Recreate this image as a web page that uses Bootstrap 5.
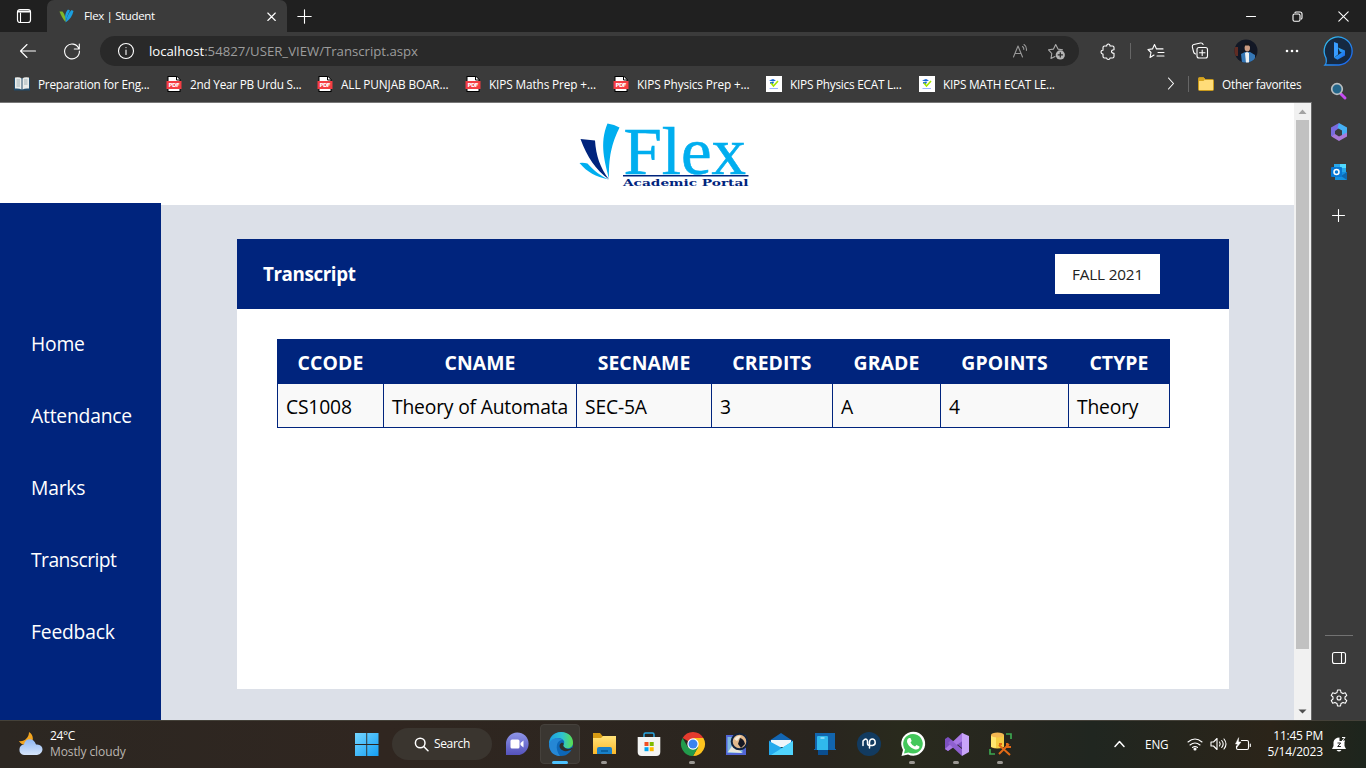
<!DOCTYPE html>
<html lang="en">
<head>
<meta charset="utf-8">
<meta name="viewport" content="width=device-width, initial-scale=1">
<title>Flex | Student</title>
<link href="https://cdn.jsdelivr.net/npm/bootstrap@5.3.0/dist/css/bootstrap.min.css" rel="stylesheet">
<style>
:root{--navy:#00247d;--chrome:#3b3b3b}
body{width:1366px;height:768px;overflow:hidden;font-family:"Open Sans","Noto Sans",sans-serif;font-size:12px;line-height:16px;background:var(--chrome);color:#fff}
svg{display:block;flex:none;overflow:visible}
.ln{fill:none;stroke:#fff;stroke-width:1.1;stroke-linecap:round;stroke-linejoin:round}
.tabstrip{height:32px;background:#202020}
.tab-pages{width:47px;padding-left:16px}
.tab-active{width:240px;background:var(--chrome);border-radius:7px 7px 0 0;padding:0 10px 0 12px}
.tab-title{margin-left:9px;font-size:11.5px;letter-spacing:-.35px}
.toolbar{height:38px;padding-left:6px}
.cell{width:44px;flex:none;display:flex;align-items:center;justify-content:center}
.cell.newtab{width:34px}
.cell.winbtn{width:46px}
.address{width:979px;height:30px;border-radius:15px;background:#292929;margin:0 7px 0 6px;padding:0 4px 0 16px}
.url{margin-left:13px;font-size:13.2px;letter-spacing:-.01px;color:#9d9d9d}
.cell-sm{width:37px;display:flex;justify-content:center}
.vline{width:1px;height:16px;background:#666}
.bookmarks{width:1311px;height:32px;padding:0 0 5px 14px;letter-spacing:-.24px;font-size:11.8px}
.bm{flex:none;display:flex;align-items:center;gap:8px;white-space:nowrap}
.w152{width:152px}.w151{width:151px}.w148{width:148px}.w153{width:153px}
.caps{letter-spacing:-.12px}
.viewport{width:1312px;border-top:1px solid #777;border-right:1px solid #686868}
.site{width:1294px;background:#dce0e8}
.site-head{height:102px;background:#fff;padding-left:36px}
.site-nav{width:161px;background:var(--navy);margin-top:-2px;padding:105px 0 0 31px}
.site-nav .nav-link{height:72px;padding:0;display:flex;align-items:center;color:#fff;font-size:19.3px;letter-spacing:-.2px}
.site-nav .tight{letter-spacing:-.55px}
.panel{width:992px;height:450px;margin:34px 0 0 76px;background:#fff;color:#000}
.panel-head{height:70px;background:var(--navy);padding:0 69px 0 26px}
.panel-head h1{font-size:18.8px;font-weight:700;letter-spacing:-.4px;color:#fff}
.term{width:105px;height:40px;background:#fff;color:#222;font-size:15.3px;letter-spacing:-.15px}
.grades{width:892px;margin:30px 0 0 40px;table-layout:fixed;border-collapse:collapse;font-size:19.3px;letter-spacing:-.18px;line-height:28px;color:#000}
.grades th{background:var(--navy);color:#fff;height:44px;border:1px solid var(--navy);padding:2px 0 0;text-align:center;font-size:19.4px;letter-spacing:.08px}
.grades td{background:#f9f9f9;height:44px;border:1px solid var(--navy);padding:3px 0 0 8px;white-space:nowrap}
.scroll{width:17px;background:#f1f1f1}
.thumb{width:13px;height:529px;background:#c1c1c1}
.edgebar{width:54px;padding-top:11px}
.edgebar svg{margin-right:1px}
.taskbar{height:48px;padding-bottom:1px;background:linear-gradient(90deg,#2c2722 0%,#302620 28%,#29251f 60%,#292a1d 66%,#26261f 74%,#202620 80%,#2b2419 93%,#1d251d 100%);border-top:1px solid #444139}
.weather{width:345px;padding-left:18px;gap:6px}
.search{width:100px;height:32px;border-radius:16px;background:#3a352f;margin:0 2px 0 3px;gap:5px;padding-left:22px}
.app{width:44px;height:46px;flex:none;position:relative;display:flex;align-items:center;justify-content:center}
.app:not(.start) svg{margin-left:1px}
.app.on{width:40px;height:40px;margin:0 2px;border-radius:4px;background:#3a3631;border:1px solid #45413c}
.app .run{position:absolute;bottom:3px;width:6px;height:3px;border-radius:2px;background:#9a9792}
.app.on .run{width:16px;bottom:-1px;background:#4cc2ff}
.tray{width:343px;padding-left:92px}
</style>
</head>
<body class="d-flex flex-column">
<svg width="0" height="0" class="position-absolute">
<defs>
<linearGradient id="gb" x1="0" y1="0" x2="1" y2="1"><stop stop-color="#35c5f0"/><stop offset="1" stop-color="#185df0"/></linearGradient>
<linearGradient id="gw" x1="0" y1="0" x2="1" y2="1"><stop stop-color="#74d5ff"/><stop offset="1" stop-color="#149ff4"/></linearGradient>
<linearGradient id="ge" x1="0" y1="0" x2="1" y2="0"><stop stop-color="#1b9de2"/><stop offset=".55" stop-color="#2fc3d0"/><stop offset="1" stop-color="#5be04b"/></linearGradient>
<linearGradient id="gf" x1="0" y1="0" x2="0" y2="1"><stop stop-color="#ffe27a"/><stop offset="1" stop-color="#fbb829"/></linearGradient>
<linearGradient id="gc" x1="0" y1="0" x2="0" y2="1"><stop stop-color="#8f96e8"/><stop offset="1" stop-color="#5552bb"/></linearGradient>
<linearGradient id="gl" x1="0" y1="0" x2="0" y2="1"><stop stop-color="#8fb7f3"/><stop offset="1" stop-color="#d6e5fb"/></linearGradient>
<symbol id="pdf" viewBox="0 0 16 16"><path d="M1.500 0H11l3.500 3.500V16h-13z" fill="#000"/><path d="M2.500 1h8l3 3v11h-11z" fill="#fff"/><path d="M10.500.500v3.500H14" fill="#fff" stroke="#000"/><path fill="#f43d43" d="M.5 5h15v8H.5z"/><text x="2.500" y="11.200" font-family="DejaVu Sans" font-weight="bold" font-size="5.500" textLength="11" fill="#fff">PDF</text></symbol>
<symbol id="kips" viewBox="0 0 16 16"><path fill="#fff" d="M0 0h16v16H0z"/><path fill="#1668d8" d="m3 4.500 4-1.500 3 1.500-3 1zM4 6h4l-1 2H4.500z"/><path d="m5 7 2.500 3L12 5" fill="none" stroke="#a5e600" stroke-width="1.600"/><path d="M3.500 12.500h8.500" stroke="#9ab4ff"/></symbol>
</defs></svg>

<div class="tabstrip d-flex flex-shrink-0">
 <div class="tab-pages d-flex align-items-center"><svg width="16" height="16" viewBox="0 0 16 16" class="ln"><rect x="1.500" y="1.500" width="13" height="13" rx="2.500" stroke-width="1.200"/><path d="M2.500 3.500h11" stroke-width="2"/><path d="M4.500 5v9"/></svg></div>
 <div class="tab-active d-flex align-items-center">
  <svg width="16" height="16" viewBox="0 0 16 16"><path fill="#1a9fe0" d="M6.500 14C5.500 8 6.500 4 9 1.500l2 1C9 6 8 9 6.500 14z"/><path fill="#1a9fe0" d="M6.500 14.500c1-4 2.500-9 6-12.500l2 1c-1 5-4 9-8 11.500z"/><path fill="#7fb629" d="M.5 3.500h3C6 6 6.500 10 6.500 14 4 11 2 8 .5 3.500z"/></svg>
  <span class="tab-title">Flex | Student</span>
  <svg width="11" height="11" viewBox="0 0 11 11" class="ln ms-auto"><path d="m1.800 2 7.500 7.500m0-7.500L1.800 9.500"/></svg>
 </div>
 <div class="cell newtab"><svg width="15" height="15" viewBox="0 0 15 15" class="ln"><path d="M7.500.8v13.400M.8 7.500h13.400"/></svg></div>
 <div class="d-flex ms-auto">
  <div class="cell winbtn"><svg width="10" height="10" viewBox="0 0 10 10" class="ln"><path d="M.5 5.500h9"/></svg></div>
  <div class="cell winbtn"><svg width="11" height="11" viewBox="0 0 11 11" class="ln"><rect x="1" y="3" width="7" height="7.200" rx="1.500"/><path d="M3 1.500Q3 1 4.500 1H8q2 0 2 2v3.500q0 1-.5 1.500"/></svg></div>
  <div class="cell winbtn"><svg width="11" height="11" viewBox="0 0 11 11" class="ln"><path d="m.8.800 9.400 9.400m0-9.400L.8 10.200"/></svg></div>
 </div>
</div>

<div class="toolbar d-flex align-items-center flex-shrink-0">
 <div class="cell"><svg width="18" height="16" viewBox="0 0 18 16" class="ln"><path d="M16.500 8H1.500M8 1.500 1.500 8 8 14.500"/></svg></div>
 <div class="cell"><svg width="18" height="18" viewBox="0 0 18 18" class="ln"><path d="M15.800 6.500A7.400 7.400 0 1 0 16.400 9M16.300 2v5h-5"/></svg></div>
 <div class="address d-flex align-items-center">
  <svg width="20" height="20" viewBox="0 0 20 20" class="ln"><circle cx="10" cy="10" r="7.500"/><path d="M10 9v4.500M10 6.500v.1"/></svg>
  <span class="url"><span class="text-white">localhost</span>:54827/USER_VIEW/Transcript.aspx</span>
  <div class="cell-sm ms-auto"><svg width="17" height="16" viewBox="0 0 17 16" class="ln" style="stroke:#999"><path d="M2.500 14 7 3l4.500 11M4 10.500h6M11.500 3.500q1.500 1 1.300 3M13 1.500q3 2 2.400 6"/></svg></div>
  <div class="cell-sm"><svg width="19" height="18" viewBox="0 0 19 18"><path class="ln" style="stroke:#aaa" d="m8 14.500-4 2 .8-5L1.500 7.800l5-.7L8.700 2.500 11 7.100l4.500.7"/><circle cx="13.300" cy="12.900" r="4.600" fill="#b4b4b4"/><path d="M13.300 10.300v5.200M10.700 12.900h5.200" stroke="#292929" stroke-width="1.200"/></svg></div>
 </div>
 <div class="cell"><svg width="16" height="17" viewBox="0 0 16 17" class="ln"><path d="M4.500 3h2.200c-.3-2.600 3.600-2.600 3.300 0h2.500q1.500 0 1.500 1.500v2.200c-3.300-.2-3.300 3.800 0 3.600V13.500q0 1.500-1.500 1.500H10c0 2-3.300 2-3.300 0H4.500Q3 15 3 13.500V11C.4 11.200.4 7 3 7.200V4.500Q3 3 4.500 3z"/></svg></div>
 <div class="vline"></div>
 <div class="cell" style="margin-left:3px"><svg width="18" height="17" viewBox="0 0 18 17" class="ln"><path d="m7 12-4 2.500 1-5L1 6.500l4.500-.6L7.500 1.500l2 4.400H16M11 9.500h6M10 13h7"/></svg></div>
 <div class="cell"><svg width="18" height="18" viewBox="0 0 18 18" class="ln"><rect x="6" y="5.500" width="10.500" height="10.500" rx="2"/><path d="M11.200 8v5.500M8.500 10.700H14M4.500 12Q3 11.500 2.600 10L1.300 4.800Q1 3 2.800 2.500L9.500 1q2-.3 2.600 1.500"/></svg></div>
 <div class="cell" style="margin-left:2px"><svg width="24" height="24" viewBox="0 0 24 24"><clipPath id="av"><circle cx="12" cy="12" r="11.500"/></clipPath><g clip-path="url(#av)"><path fill="#121725" d="M0 0h24v24H0z"/><path fill="#602c23" d="M0 8h4v9H0z"/><path fill="#3677b5" d="m7 15 4-2h5l5 3v8H8z"/><path fill="#eef1f3" d="m11 14 2-1 2 1v10h-3z"/><ellipse cx="13.300" cy="8.700" rx="2.700" ry="3.800" fill="#c99a82"/><path fill="#15151a" d="M10 8c0-6 7-5 6.500 0L15 6.500h-4z"/></g></svg></div>
 <div class="cell" style="margin-left:2px"><svg width="14" height="4"><g fill="#fff"><circle cx="2" cy="2" r="1.300"/><circle cx="7" cy="2" r="1.300"/><circle cx="12" cy="2" r="1.300"/></g></svg></div>
 <div class="cell" style="margin-left:3px"><svg width="32" height="32" viewBox="0 0 32 32"><path d="M2 30q2-2 1-7A14 14 0 1 1 16 30z" fill="#152942" stroke="url(#gb)" stroke-width="1.300"/><path d="m11 7 4 1.600v11l-4 3.200z" fill="#389cff"/><path d="m11 22.800 3.500 2L22 20.500v-5l-7-3 1.800 4 2 1z" fill="url(#gb)"/></svg></div>
</div>

<div class="d-flex flex-grow-1" style="min-height:0">
<div class="d-flex flex-column">
 <div class="bookmarks d-flex align-items-center flex-shrink-0">
  <div class="bm w152"><svg width="16" height="16" viewBox="0 0 16 16"><path fill="#224b69" d="M0 2h16v12.500H0z"/><path fill="#e9eceb" d="M1 1.500q5-.8 6.500 1v11Q5 12 1 12.500zM8.500 2.500Q10 .7 15 1.500v11q-4-.5-6.500 1z"/><path d="M2.500 4H6M2.500 6H6m-3.500 2H6m-3.500 2H6m4-6h3.500M10 6h3.500M10 8h3.500" stroke="#a1b1b5"/></svg>Preparation for Eng...</div>
  <div class="bm w151"><svg width="16" height="16"><use href="#pdf"/></svg>2nd Year PB Urdu S...</div>
  <div class="bm w148 caps"><svg width="16" height="16"><use href="#pdf"/></svg>ALL PUNJAB BOAR...</div>
  <div class="bm w148 caps"><svg width="16" height="16"><use href="#pdf"/></svg>KIPS Maths Prep +...</div>
  <div class="bm w153 caps"><svg width="16" height="16"><use href="#pdf"/></svg>KIPS Physics Prep +...</div>
  <div class="bm w153"><svg width="16" height="16"><use href="#kips"/></svg>KIPS Physics ECAT L...</div>
  <div class="bm"><svg width="16" height="16"><use href="#kips"/></svg>KIPS MATH ECAT LE...</div>
  <svg width="8" height="13" viewBox="0 0 8 13" class="ln ms-auto me-3"><path d="m1.500 1 5 5.500-5 5.500"/></svg>
  <div class="vline" style="margin-right:9px;margin-left:-3px"></div>
  <div class="bm" style="width:113px"><svg width="16" height="16" viewBox="0 0 16 16"><path d="M.5 2.500q0-1 1-1h4l2 2h7q1 0 1 1v9q0 1-1 1h-13q-1 0-1-1z" fill="#ffdc79" stroke="#c99a1b"/><path fill="#d6a420" d="M1 2h5l1 1.500L5.500 5H1z"/></svg>Other favorites</div>
 </div>
 <main class="viewport d-flex flex-grow-1">
  <div class="site d-flex flex-column">
   <header class="site-head d-flex justify-content-center flex-shrink-0">
    <svg width="170" height="70" viewBox="580 120 170 70" style="margin-top:17px"><path fill="#00aeef" d="M607.500 123.500q7 1 12 4c-6 13-11 25-10.500 51-4-16-10-35-1.500-55z"/><path fill="#00247d" d="m580.500 139 14.500 1.500c1 15 5 27 14 39C596 170 587 157 580.500 139z"/><path fill="#00aeef" d="M579.500 163q4-.5 8 .5c7 8 13 12 21 16-13-3-21-7-29-16.500z"/>
    <text x="623.500" y="174" font-family="Liberation Serif" font-size="67" textLength="122.500" lengthAdjust="spacingAndGlyphs" fill="#00aeef" stroke="#00aeef" stroke-width=".6">Flex</text><path fill="#00247d" d="M623 175h125.500v1.600H623z"/><text x="623" y="185.600" font-family="DejaVu Serif" font-weight="bold" font-size="10" textLength="125.500" lengthAdjust="spacingAndGlyphs" fill="#00247d">Academic Portal</text></svg>
   </header>
   <div class="d-flex flex-grow-1" style="min-height:0">
    <nav class="site-nav nav flex-column flex-nowrap"><a class="nav-link">Home</a><a class="nav-link">Attendance</a><a class="nav-link">Marks</a><a class="nav-link tight">Transcript</a><a class="nav-link">Feedback</a></nav>
    <section class="panel">
     <div class="panel-head d-flex align-items-center justify-content-between"><h1 class="mb-0">Transcript</h1><div class="term d-flex align-items-center justify-content-center">FALL 2021</div></div>
     <table class="grades">
      <colgroup><col style="width:106px"><col style="width:193px"><col style="width:135px"><col style="width:121px"><col style="width:108px"><col style="width:128px"><col style="width:101px"></colgroup>
      <thead><tr><th>CCODE</th><th>CNAME</th><th>SECNAME</th><th>CREDITS</th><th>GRADE</th><th>GPOINTS</th><th>CTYPE</th></tr></thead>
      <tbody><tr><td>CS1008</td><td>Theory of Automata</td><td>SEC-5A</td><td>3</td><td>A</td><td>4</td><td>Theory</td></tr></tbody>
     </table>
    </section>
   </div>
  </div>
  <div class="scroll d-flex flex-column align-items-center">
   <svg width="17" height="17"><path d="m4.500 11 4-4.500 4 4.500z" fill="#a3a3a3"/></svg><div class="thumb"></div><svg width="17" height="17" class="mt-auto"><path d="m4.500 6.500 4 4 4-4z" fill="#505050"/></svg>
  </div>
 </main>
</div>
<aside class="edgebar d-flex flex-column align-items-center">
 <svg width="20" height="20" viewBox="0 0 20 20"><path d="m12 13 4 4" stroke="#c64bf2" stroke-width="3" stroke-linecap="round"/><circle cx="8" cy="8" r="5.300" fill="#24668a" stroke="#b9bec0" stroke-width="1.700"/></svg>
 <svg width="18" height="18" viewBox="0 0 18 18" style="margin-top:22px"><path fill="#7a6be0" d="M9 0 1 4.500v8.500l4 1.500V8l4-3z"/><path fill="#45b0f5" d="m9 0 8 4.500v6.300L12 13V7.500L7.500 5z"/><path fill="#a979d8" d="M17 9.500v4L9 18l-7.500-4.500L5 11l4 2.500 4-2z"/></svg>
 <svg width="18" height="18" viewBox="0 0 18 18" style="margin-top:22px"><path fill="#28a8ea" d="M4 1h12v8H4z"/><path fill="#50d9ff" d="M10 1h6v4h-6z"/><path fill="#1490df" d="M5 9h12v8H5z"/><path fill="#0f67ae" d="m17 9-6 4 6 4z"/><rect x="1" y="4" width="11" height="10" rx="1" fill="#0878d4"/><circle cx="6.500" cy="9" r="2.500" fill="none" stroke="#fff" stroke-width="1.500"/></svg>
 <svg width="13" height="13" viewBox="0 0 13 13" class="ln" style="margin-top:28px"><path d="M6.500.5v12M.5 6.500h12"/></svg>
 <div class="mt-auto" style="width:28px;height:1px;background:#727272"></div>
 <svg width="16" height="14" viewBox="0 0 16 14" class="ln" style="margin-top:15px"><rect x="1.500" y="1.500" width="13" height="11" rx="2"/><path d="M10.500 2v10"/></svg>
 <svg width="18" height="18" viewBox="0 0 18 18" class="ln" style="margin-top:24px;margin-bottom:13px"><path d="M7 3.500 7.500 1h3l.5 2.500 2 1.100 2.300-.8 1.500 2.600L15 8v2l1.800 1.600-1.500 2.600-2.300-.8-2 1.100-.5 2.500h-3L7 14.500l-2-1.100-2.300.8-1.500-2.600L3 10V8L1.200 6.400l1.500-2.600 2.300.8z"/><circle cx="9" cy="9" r="2"/></svg>
</aside>
</div>

<footer class="taskbar d-flex align-items-center flex-shrink-0">
 <div class="weather d-flex align-items-center"><svg width="26" height="26" viewBox="0 0 26 26"><path fill="#f3a51f" d="M11 1c5 3 5 10 1 12-4 2-9 1-11-3 5 1 10-3 10-9z"/><path d="M6 24a5.300 5.300 0 0 1 0-10.500c1-7 10-7 12 0 8-1 9 9 1 10.500z" fill="url(#gl)"/></svg><div style="font-size:12px;letter-spacing:-.1px"><div style="letter-spacing:-.4px">24°C</div><div style="color:#bbb6b1">Mostly cloudy</div></div></div>
 <div class="app start"><svg width="24" height="24" viewBox="0 0 24 24"><path fill="url(#gw)" d="M0 1h11.300v11H0zm12.200 0h11.300v11H12.200zM0 12.900h11.300v11H0zm12.200 0h11.300v11H12.200z"/></svg></div>
 <div class="search d-flex align-items-center"><svg width="15" height="15" viewBox="0 0 15 15" class="ln" style="stroke-width:1.500"><circle cx="6.200" cy="6" r="4.800"/><path d="m9.700 9.500 4.300 4.300"/></svg><span style="letter-spacing:-.35px">Search</span></div>
 <div class="app"><svg width="24" height="24" viewBox="0 0 24 24"><path d="M1 23V12a11.300 11.300 0 1 1 11.300 11z" fill="url(#gc)"/><rect x="5.500" y="7.500" width="9" height="9" rx="1.500" fill="#fff"/><path fill="#fff" d="m15.500 11 3-2.500v7l-3-2.500z"/></svg></div>
 <div class="app on"><svg width="24" height="24" viewBox="0 0 24 24"><circle cx="12" cy="12" r="12" fill="#0d67b7"/><path d="M0 12C0 5 5 0 12 0c8 0 12 5 12 11 0 5-6 7-9 4-2-2 1-3 0-6-3-5-11-4-15 3z" fill="url(#ge)"/><path fill="#2587d5" d="M0 12c2-6 9-8 14-4-6-1-9 8-3 16C4 24 0 19 0 12z"/><path fill="#302f2b" d="M15 15c2 2 5 3 8 .5l.5 1.500c-5 3-10 3-12.500-1-1.500-3 1-6 3-5 2 1-1 2 1 4z"/></svg><i class="run"></i></div>
 <div class="app"><svg width="25" height="24" viewBox="0 0 25 24"><path fill="#d69a13" d="M1 1h7l2.500 3H24v8H1z"/><path fill="url(#gf)" d="M1 6h8l2-2h13v18H1z"/><path fill="#1980c8" d="M5 22v-5q0-2 2-2h11q2 0 2 2v5z"/><path d="M9 19h7" stroke="#075895" stroke-width="1.500"/></svg><i class="run"></i></div>
 <div class="app"><svg width="24" height="24" viewBox="0 0 24 24"><path d="M7 7V2.500Q7 1 8.500 1h7Q17 1 17 2.500V7" fill="none" stroke="#2aa6e0" stroke-width="1.500"/><path fill="#f4f4f3" d="M.7 5h22.600v15q0 4-4 4H4.700q-4 0-4-4z"/><path fill="#f25022" d="M7.500 10h4v4h-4z"/><path fill="#7fba00" d="M12.700 10h4v4h-4z"/><path fill="#00a4ef" d="M7.500 15.200h4v4h-4z"/><path fill="#ffb900" d="M12.700 15.200h4v4h-4z"/></svg></div>
 <div class="app"><svg width="24" height="24" viewBox="0 0 24 24"><path fill="#e33b2e" d="M1.600 6A12 12 0 0 1 22.400 6H12v6z"/><path fill="#fcc31e" d="M22.400 6A12 12 0 0 1 12 24l5.200-9L12 6z"/><path fill="#229b4c" d="M1.600 6A12 12 0 0 0 12 24l5.200-9L12 12l-5.200 3z"/><circle cx="12" cy="12" r="5.700" fill="#fff"/><circle cx="12" cy="12" r="4.500" fill="#3c82ef"/></svg><i class="run"></i></div>
 <div class="app"><svg width="24" height="24" viewBox="0 0 24 24"><path fill="#5266d6" d="M1 3h20v20H1z"/><path fill="#7fb8e0" d="M2.500 5h15v16h-15z"/><path fill="#e9e7dd" d="m3 20 6-9 8 10z"/><circle cx="14.500" cy="9.500" r="7.800" fill="#e3b98c" stroke="#13243d" stroke-width="2"/><path fill="#f3ead9" d="M9 7q3-4 7-3l-4 5z"/><path fill="#151824" d="M15 6q4 1 5 6l-4 4-3-4z"/></svg></div>
 <div class="app"><svg width="24" height="24" viewBox="0 0 24 24"><path fill="#1266b3" d="m0 9 12-8 12 8v5H0z"/><path fill="#eef5fa" d="M2 8h20v7H2z"/><path fill="#24a9ed" d="m0 9 13 7 11-7v14H0z"/><path fill="#50d4fd" d="M24 9v14H2z"/></svg></div>
 <div class="app"><svg width="24" height="24" viewBox="0 0 24 24"><path fill="#1265ad" d="M2 1h20v16h1v1H1v-1h1z"/><path fill="#0a4e90" d="M5 15h10v8H5z"/><path fill="#30b9ed" d="M4 5q0-1 1-1h9q1 0 1 1v13H4z"/><path d="M7.500 6h4" stroke="#d8f5ff"/></svg></div>
 <div class="app"><svg width="24" height="24" viewBox="0 0 24 24"><circle cx="12" cy="12" r="12" fill="#123b60"/><path d="M6 13.500V9q3.500-4 4.500 0v2.500q0 2 2 2h3q3-.5 2.700-3.500-.4-3-2.900-3t-2.800 3v6" fill="none" stroke="#fff" stroke-width="1.500" stroke-linecap="round"/></svg></div>
 <div class="app"><svg width="24" height="24" viewBox="0 0 24 24"><path fill="#fff" d="M.5 24 2 18A12 12 0 1 1 7 22.500z"/><path fill="#43c85b" d="m3 21.500 1-4A9.800 9.800 0 1 1 7.500 20.500z"/><path fill="#fff" d="M8 6h1.500l1.200 3-1.200 1.500q1.500 3 4.500 4l1.500-1.500 3 1.500c0 3-3 3.500-5 2.700C9 15.800 6 12 6 9q0-2 2-3z"/></svg><i class="run"></i></div>
 <div class="app"><svg width="24" height="24" viewBox="0 0 24 24"><path fill="#7c50c0" d="m0 7 3-2 14 11V8L3 19l-3-2z"/><path fill="#a878e4" d="m0 17 17-16 2 1v6L3 19z"/><path fill="#c8a4f8" d="m17 1 7 3v16l-7 4z"/><path fill="#8e60d0" d="m6 8 11 9v7L3 11z"/></svg><i class="run"></i></div>
 <div class="app"><svg width="24" height="24" viewBox="0 0 24 24"><path fill="#f5cc42" d="M2 3v12q6 3 13 0V3z"/><path fill="#ffe66f" d="M2 4h5v12l-5-1z"/><ellipse cx="8.500" cy="3" rx="6.500" ry="2.500" fill="#f4b751"/><path d="M17 2h5v5M1 17v5h5" fill="none" stroke="#3da650" stroke-width="1.700"/><path d="m10 13 11 10M10 22 20 12m-10 0 3 0m5-1 0 4 4 0" fill="none" stroke="#e36a16" stroke-width="2"/></svg><i class="run"></i></div>
 <div class="tray d-flex align-items-center">
  <svg width="11" height="8" viewBox="0 0 11 8" class="ln" style="stroke-width:1.500"><path d="m1 6.500 4.500-5 4.500 5"/></svg>
  <span style="margin-left:20px;width:24px;font-size:11.700px;letter-spacing:-.1px">ENG</span>
  <svg width="16" height="14" viewBox="0 0 16 14" class="ln" style="margin-left:18px"><path d="M1 5Q8-1 15 5M3 8q5-4 10 0M5.500 10.500q2.500-2 5 0"/><circle cx="8" cy="12" r="1" fill="#fff"/></svg>
  <svg width="17" height="14" viewBox="0 0 17 14" class="ln" style="margin-left:7px"><path d="M1 5h2.500L7 1.500v11L3.500 9H1zM9.500 5q1.500 2 0 4M11.700 3.500q3 3.500 0 7M14 2q4 5 0 10"/></svg>
  <svg width="18" height="15" viewBox="0 0 18 15" class="ln" style="margin-left:7px"><path d="M7.500 3.500H13q1.500 0 1.500 1.500v6q0 1.500-1.500 1.500H4Q2.500 12.500 2.500 11V9M16.300 7v2.500"/><path fill="#fff" d="M4.500 1 1.500 7h2L2.800 10.500 7 5H4.500z" stroke-width=".5"/></svg>
  <div class="text-end" style="width:71px;font-size:12px;letter-spacing:-.15px;white-space:nowrap"><span style="letter-spacing:-.25px">11:45 PM</span><br>5/14/2023</div>
  <svg width="16" height="17" viewBox="0 0 16 17" style="margin-left:8px"><path fill="#fff" d="M2.500 6q1-4.500 6-4.500V5h5v5l1.500 3H1l1.500-3zM5.500 14h5q-2.500 3-5 0z"/><path d="M11 1.500h3l-3 3.500h3" fill="none" stroke="#fff"/><path d="M6.500 7h3.200l-3 3.500h3.200" fill="none" stroke="#222"/></svg>
 </div>
</footer>
<script src="https://cdn.jsdelivr.net/npm/bootstrap@5.3.0/dist/js/bootstrap.bundle.min.js"></script>
</body>
</html>
